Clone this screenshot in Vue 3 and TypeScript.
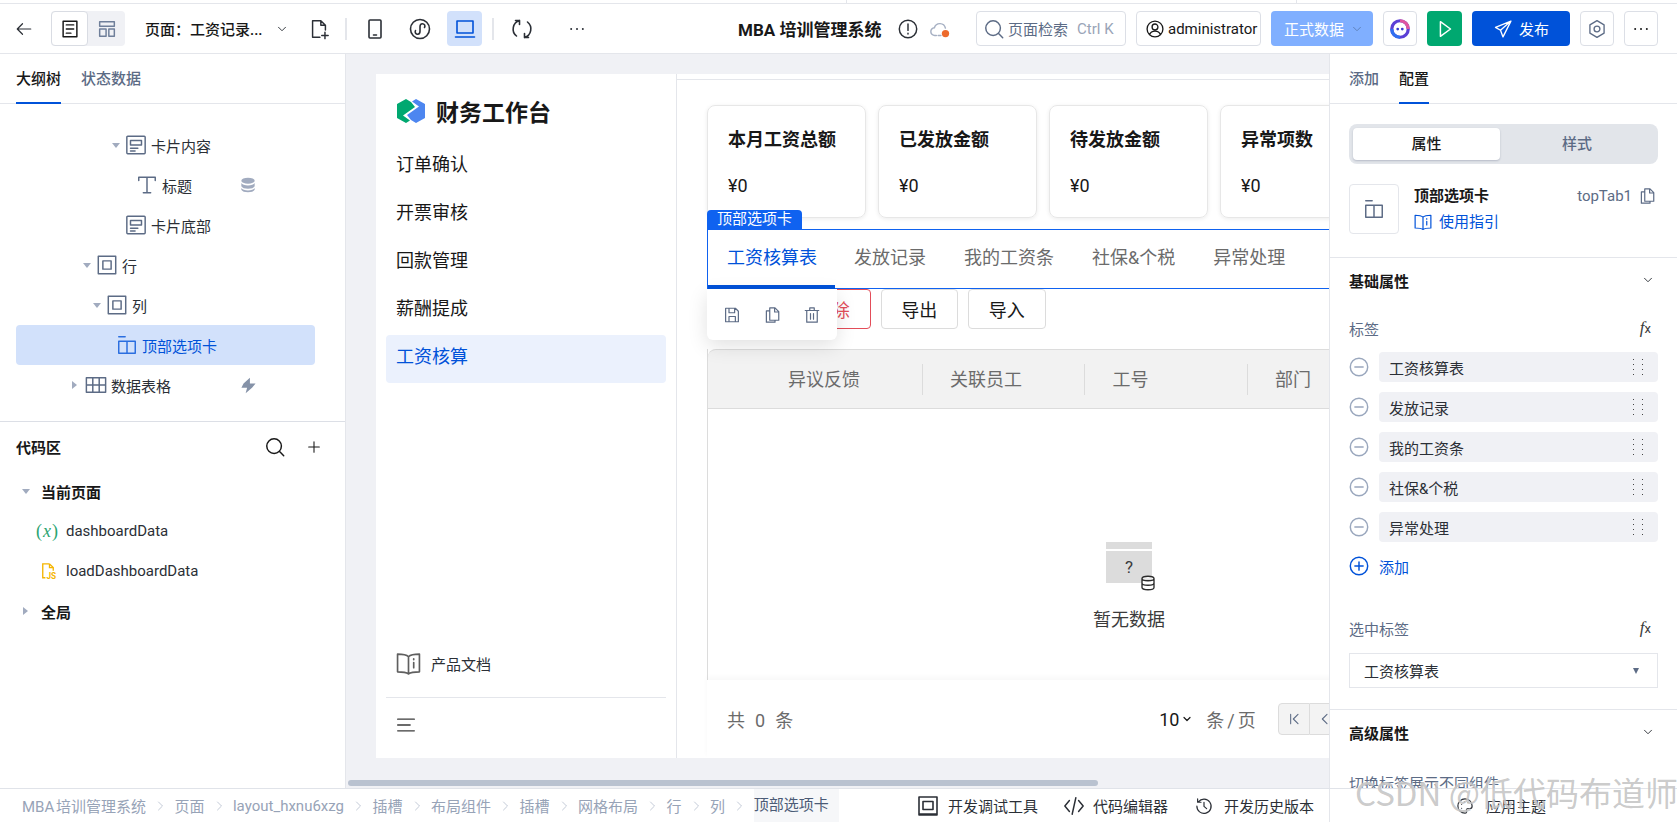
<script setup lang="ts">
interface TreeNode {
  label: string
  icon: string
  left: number
  caret?: 'down' | 'right'
  extra?: 'db' | 'bolt'
  active?: boolean
}

// stroke paths on a 24 grid
const icons: Record<string, string> = {
  back: 'M21 12H3M10 5l-7 7 7 7',
  page: 'M4.500 3.500h15v17h-15zM8 7.500h8M8 12h8M8 16.500h5',
  layout: 'M4 4h16v5H4zM4 12h7v8H4zM14 12h6v8h-6z',
  chev: 'M6 9l6 6 6-6',
  filePlus: 'M14 3H5v18h8M14 3l5 5v5M14 3v5h5M15 19h7M18.500 15.500v7',
  phone: 'M7 3h10a1 1 0 0 1 1 1v16a1 1 0 0 1-1 1H7a1 1 0 0 1-1-1V4a1 1 0 0 1 1-1zM10.500 18h3',
  mini: 'M2.500 12a9.500 9.500 0 1 0 19 0 9.500 9.500 0 1 0-19 0zM7.500 13.500c-1 2 .5 4 2.300 3.800 1.600-.2 2.200-1.400 2.200-3V9.700c0-1.600.8-3 2.400-3 2 0 3.200 2 2.100 3.800',
  laptop: 'M4 4h16v12H4zM2.500 20h19',
  refresh: 'M6.500 19A9 9 0 0 1 9.500 3.400M17.500 5a9 9 0 0 1-3 15.600M9.500 7.500v-4H5.500M14.500 16.500v4h4',
  more: 'M5 12h.01M12 12h.01M19 12h.01',
  info: 'M2.500 12a9.500 9.500 0 1 0 19 0 9.500 9.500 0 1 0-19 0zM12 6.500v7M12 16.500v1',
  cloud: 'M8 19H6.500a4.200 4.200 0 0 1-.6-8.400 6.200 6.200 0 0 1 12 .4M10 19h3',
  search: 'M3 11a8 8 0 1 0 16 0 8 8 0 1 0-16 0zM17 17l4.500 4.500',
  user: 'M2.500 12a9.500 9.500 0 1 0 19 0 9.500 9.500 0 1 0-19 0zM8.500 9.500a3.500 3.500 0 1 0 7 0 3.500 3.500 0 1 0-7 0zM5.500 19c1-3 3.500-4.500 6.500-4.500s5.500 1.500 6.500 4.500',
  send: 'M21.500 2.500L3 10l6 3.500 3 8zM21.500 2.500L9 13.500',
  hex: 'M12 2l8.500 5v10L12 22l-8.500-5V7zM12 8.500a3.500 3.500 0 1 0 0 7 3.500 3.500 0 1 0 0-7z',
  play: 'M7 4l11 8-11 8z',
  card: 'M3 2.500h18a1 1 0 0 1 1 1v17a1 1 0 0 1-1 1H3a1 1 0 0 1-1-1v-17a1 1 0 0 1 1-1zM6 7h12v5H6zM6 15.500h8M6 18.500h5',
  text: 'M3 7V3.500h18V7M12 3.500v17M8 20.500h8',
  box: 'M2.500 2.500h19v19h-19zM7.500 7.500h9v9h-9z',
  tabs: 'M3 8h18v13H3zM12 8v13M3 3h7',
  grid: 'M1.500 4h21v16h-21zM1.500 12h21M8.500 4v16M15.500 4v16',
  save: 'M3.500 3h13l4 4v14h-17zM8 3v6h7.500V3M8 21v-7h8.500v7',
  copy: 'M9 2.500h7l5 5v11.500H9zM15.500 2.500v5.500H21M9 6.500H4.500v15H16V19',
  trash: 'M3 6h18M9 6V2.500h6V6M5 6v15.500h14V6M10 10v7.500M14 10v7.500',
  book: 'M12 5.500C10 3.500 6 3 1.500 3v17c4.500 0 8.500.500 10.500 2 2-1.500 6-2 10.500-2V3c-4.500 0-8.500.500-10.500 2.500zM12 5.500V22M17 7.500v.800M17 11v5',
  menu: 'M2 5h20M2 12h15M2 19h20',
  minus: 'M2.500 12a9.500 9.500 0 1 0 19 0 9.500 9.500 0 1 0-19 0zM7.500 12h9',
  plus: 'M2.500 12a9.500 9.500 0 1 0 19 0 9.500 9.500 0 1 0-19 0zM12 7.500v9M7.500 12h9',
  add: 'M12 4v16M4 12h16',
  monitor: 'M3 3h18v18H3zM7 7.500h10v8H7zM3 20h18',
  code: 'M7 6l-5 6 5 6M17 6l5 6-5 6M14 3l-4 18',
  history: 'M4.500 6.500A9.500 9.500 0 1 1 2.500 12M3.500 2.500v4.500H8M12 7v5.500l3.500 3',
  palette: 'M12 2.500a9.500 9.500 0 0 0 0 19c2 0 2.500-1.500 2-3-.600-1.800.400-3 2-3h2.500c2 0 3-1.500 3-3.500 0-5.500-4.500-9.500-9.500-9.500zM7.500 10h.01M11 6.500h.01M16 7.500h.01M7.500 15h.01',
  file: 'M14 2.500H5V21h3.500M14 2.500l5 5v4M14 2.500v5h5',
  pgFirst: 'M7 5v14M18 5l-7 7 7 7',
  pgPrev: 'M15 5l-7 7 7 7',
  crumb: 'M9 4l8 8-8 8',
  dbLine: 'M4 6c0-4 16-4 16 0v12c0 4-16 4-16 0zM4 6c0 4 16 4 16 0M4 12c0 4 16 4 16 0',
}

const tree: TreeNode[] = [
  { label: '卡片内容', icon: 'card', left: 127, caret: 'down' },
  { label: '标题', icon: 'text', left: 138, extra: 'db' },
  { label: '卡片底部', icon: 'card', left: 127 },
  { label: '行', icon: 'box', left: 98, caret: 'down' },
  { label: '列', icon: 'box', left: 108, caret: 'down' },
  { label: '顶部选项卡', icon: 'tabs', left: 118, active: true },
  { label: '数据表格', icon: 'grid', left: 87, caret: 'right', extra: 'bolt' },
]

const menus = ['订单确认', '开票审核', '回款管理', '薪酬提成', '工资核算']
const stats = ['本月工资总额', '已发放金额', '待发放金额', '异常项数']
const tabs = ['工资核算表', '发放记录', '我的工资条', '社保&个税', '异常处理']
const columns = ['异议反馈', '关联员工', '工号', '部门']
const crumbs = ['MBA 培训管理系统', '页面', 'layout_hxnu6xzg', '插槽', '布局组件', '插槽', '网格布局', '行', '列', '顶部选项卡']
</script>

<template>
  <div class="root">
    <div class="strip"><i></i><i></i></div>

    <header class="header">
      <button class="tool back"><svg class="ico i18" viewBox="0 0 24 24"><path :d="icons.back" /></svg></button>
      <div class="view-seg">
        <span class="view-on"><svg class="ico i22" viewBox="0 0 24 24"><path :d="icons.page" /></svg></span>
        <span class="view-off"><svg class="ico i22 muted" viewBox="0 0 24 24"><path :d="icons.layout" /></svg></span>
      </div>
      <span class="page-name">页面：工资记录...</span>
      <button class="tool name-chev"><svg class="ico i14" viewBox="0 0 24 24"><path :d="icons.chev" /></svg></button>
      <button class="tool new-page"><svg class="ico i22" viewBox="0 0 24 24"><path :d="icons.filePlus" /></svg></button>
      <i class="divider first"></i>
      <button class="tool"><svg class="ico i24" viewBox="0 0 24 24"><path :d="icons.phone" /></svg></button>
      <button class="tool"><svg class="ico i24" viewBox="0 0 24 24"><path :d="icons.mini" /></svg></button>
      <button class="tool on"><svg class="ico i24" viewBox="0 0 24 24"><path :d="icons.laptop" /></svg></button>
      <i class="divider"></i>
      <button class="tool"><svg class="ico i24" viewBox="0 0 24 24"><path :d="icons.refresh" /></svg></button>
      <button class="tool dots"><svg class="ico i20 thick" viewBox="0 0 24 24"><path :d="icons.more" /></svg></button>

      <strong class="app-title">MBA 培训管理系统</strong>
      <svg class="ico i22 app-info" viewBox="0 0 24 24"><path :d="icons.info" /></svg>
      <svg class="ico i22 app-cloud" viewBox="0 0 24 24">
        <path :d="icons.cloud" />
        <circle class="dot-orange" cx="18" cy="17" r="4" />
      </svg>

      <div class="actions">
        <div class="search">
          <svg class="ico i22 slate" viewBox="0 0 24 24"><path :d="icons.search" /></svg>
          <span>页面检索</span>
          <em>Ctrl K</em>
        </div>
        <div class="user">
          <svg class="ico i20" viewBox="0 0 24 24"><path :d="icons.user" /></svg>
          <span>administrator</span>
        </div>
        <div class="data-btn">
          <span>正式数据</span>
          <svg class="ico i14" viewBox="0 0 24 24"><path :d="icons.chev" /></svg>
        </div>
        <div class="square robot">
          <svg width="22" height="22" viewBox="0 0 24 24">
            <circle cx="12" cy="12" r="9" fill="none" stroke="#5b3fd6" stroke-width="3.500" />
            <path d="M12 3a9 9 0 0 1 9 9" fill="none" stroke="#e0559f" stroke-width="3.500" />
            <path d="M3 12a9 9 0 0 0 9 9" fill="none" stroke="#2f6ff0" stroke-width="3.500" />
            <circle cx="9.500" cy="12" r="1.500" fill="#3b3bd0" />
            <circle cx="14.500" cy="12" r="1.500" fill="#3b3bd0" />
          </svg>
        </div>
        <div class="play"><svg class="ico i22" viewBox="0 0 24 24"><path :d="icons.play" /></svg></div>
        <div class="publish">
          <svg class="ico i20" viewBox="0 0 24 24"><path :d="icons.send" /></svg>
          <span>发布</span>
        </div>
        <div class="square"><svg class="ico i20 slate" viewBox="0 0 24 24"><path :d="icons.hex" /></svg></div>
        <div class="square"><svg class="ico i20 thick" viewBox="0 0 24 24"><path :d="icons.more" /></svg></div>
      </div>
    </header>

    <main class="main">
      <aside class="left-panel">
        <div class="panel-tabs">
          <span class="on">大纲树</span>
          <span>状态数据</span>
        </div>

        <div class="tree">
          <div
            v-for="node in tree"
            :key="node.label"
            class="tree-row"
            :class="{ active: node.active }"
            :style="{ paddingLeft: node.left - 18 + 'px' }"
          >
            <i v-if="node.caret" class="caret" :class="node.caret"></i>
            <svg class="ico i22 slate" viewBox="0 0 24 24"><path :d="icons[node.icon]" /></svg>
            <span>{{ node.label }}</span>
            <svg v-if="node.extra === 'db'" class="extra" width="16" height="16" viewBox="0 0 24 24">
              <ellipse cx="12" cy="5.500" rx="10" ry="4.500" />
              <path d="M2 9c2 5 18 5 20 0v5c-2 5-18 5-20 0z" />
              <path d="M2 16.500c2 5 18 5 20 0V19c-2 5-18 5-20 0z" />
            </svg>
            <svg v-if="node.extra === 'bolt'" class="extra bolt" width="17" height="17" viewBox="0 0 24 24">
              <path d="M14 1L5 9 2 15h8l-2 8 9-8 5-6h-8z" />
            </svg>
          </div>
        </div>

        <section class="code">
          <div class="code-head">
            <strong>代码区</strong>
            <svg class="ico i22" viewBox="0 0 24 24"><path :d="icons.search" /></svg>
            <svg class="ico i16" viewBox="0 0 24 24"><path :d="icons.add" /></svg>
          </div>
          <div class="code-group"><i class="caret down"></i><strong>当前页面</strong></div>
          <div class="code-item">
            <span class="var-icon">(<i>x</i>)</span>
            <span>dashboardData</span>
          </div>
          <div class="code-item">
            <svg class="js-icon" width="18" height="20" viewBox="0 0 24 24">
              <path class="js-line" :d="icons.file" />
              <text x="10" y="22" class="js-text">JS</text>
            </svg>
            <span>loadDashboardData</span>
          </div>
          <div class="code-group"><i class="caret right"></i><strong>全局</strong></div>
        </section>
      </aside>

      <section class="canvas">
        <div class="app">
          <nav class="side">
            <div class="brand">
              <svg width="28" height="24" viewBox="0 0 28 24">
                <path fill="#00a870" d="M9 0L0 5v14l9 5 4-2.500-7-5L18 8l-4-5z" />
                <path fill="#4d86f0" d="M19 24l9-5V5l-9-5-4 2.500 7 5L10 16l4 5z" />
              </svg>
              <strong>财务工作台</strong>
            </div>
            <ul class="menu">
              <li v-for="(m, i) in menus" :key="m" :class="{ on: i === 4 }">{{ m }}</li>
            </ul>
            <div class="docs">
              <svg class="ico i25" viewBox="0 0 24 24"><path :d="icons.book" /></svg>
              <span>产品文档</span>
            </div>
            <div class="collapse"><svg class="ico i20" viewBox="0 0 24 24"><path :d="icons.menu" /></svg></div>
          </nav>

          <div class="content">
            <div class="cards">
              <div v-for="s in stats" :key="s" class="card">
                <strong>{{ s }}</strong>
                <span>¥0</span>
              </div>
            </div>

            <div class="top-tabs">
              <span class="sel-tag">顶部选项卡</span>
              <span v-for="(t, i) in tabs" :key="t" class="top-tab" :class="{ on: i === 0 }">{{ t }}</span>
              <div class="sel-tools">
                <svg class="ico i18 slate" viewBox="0 0 24 24"><path :d="icons.save" /></svg>
                <svg class="ico i18 slate" viewBox="0 0 24 24"><path :d="icons.copy" /></svg>
                <svg class="ico i18 slate" viewBox="0 0 24 24"><path :d="icons.trash" /></svg>
              </div>
            </div>

            <div class="btns">
              <button class="danger">删除</button>
              <button>导出</button>
              <button>导入</button>
            </div>

            <div class="table">
              <div class="thead">
                <span v-for="c in columns" :key="c" class="th">{{ c }}</span>
              </div>
              <div class="empty">
                <div class="empty-pic">
                  <i class="empty-top"></i>
                  <b class="empty-box">?</b>
                  <svg class="empty-db" width="18" height="18" viewBox="0 0 24 24"><path :d="icons.dbLine" /></svg>
                </div>
                <span>暂无数据</span>
              </div>
            </div>

            <div class="pagination">
              <span class="total">共<b>0</b>条</span>
              <div class="pager">
                <span class="size">10<svg class="ico i12 thick" viewBox="0 0 24 24"><path :d="icons.chev" /></svg></span>
                <span class="per">条 / 页</span>
                <span class="pg"><svg class="ico i16 slate" viewBox="0 0 24 24"><path :d="icons.pgFirst" /></svg></span>
                <span class="pg"><svg class="ico i16 slate" viewBox="0 0 24 24"><path :d="icons.pgPrev" /></svg></span>
              </div>
            </div>
          </div>
        </div>
        <i class="hscroll"></i>
      </section>

      <aside class="right-panel">
        <div class="panel-tabs">
          <span>添加</span>
          <span class="on">配置</span>
        </div>

        <div class="seg">
          <span class="seg-on">属性</span>
          <span>样式</span>
        </div>

        <div class="comp">
          <div class="comp-ico"><svg class="ico i22 slate" viewBox="0 0 24 24"><path :d="icons.tabs" /></svg></div>
          <div class="comp-text">
            <strong>顶部选项卡</strong>
            <a><svg class="ico i18" viewBox="0 0 24 24"><path :d="icons.book" /></svg>使用指引</a>
          </div>
          <span class="comp-id">topTab1</span>
          <svg class="ico i18 slate" viewBox="0 0 24 24"><path :d="icons.copy" /></svg>
        </div>

        <div class="block">
          <div class="block-head">
            <strong>基础属性</strong>
            <svg class="ico i14" viewBox="0 0 24 24"><path :d="icons.chev" /></svg>
          </div>
          <div class="field"><span>标签</span><span class="fx"><i>f</i><small>x</small></span></div>
          <div v-for="t in tabs" :key="t" class="opt">
            <svg class="ico i22 minus" viewBox="0 0 24 24"><path :d="icons.minus" /></svg>
            <div class="opt-box">
              <span>{{ t }}</span>
              <i class="grip"></i>
            </div>
          </div>
          <div class="add">
            <svg class="ico i22" viewBox="0 0 24 24"><path :d="icons.plus" /></svg>
            <span>添加</span>
          </div>
          <div class="field picked"><span>选中标签</span><span class="fx"><i>f</i><small>x</small></span></div>
          <div class="select">
            <span>工资核算表</span>
            <i class="select-caret"></i>
          </div>
        </div>

        <div class="block second">
          <div class="block-head">
            <strong>高级属性</strong>
            <svg class="ico i14" viewBox="0 0 24 24"><path :d="icons.chev" /></svg>
          </div>
          <div class="field switch"><span>切换标签展示不同组件</span></div>
        </div>
      </aside>
    </main>

    <footer class="footer">
      <div class="crumbs">
        <template v-for="(c, i) in crumbs" :key="i">
          <svg v-if="i > 0" class="ico i12 crumb-sep" viewBox="0 0 24 24"><path :d="icons.crumb" /></svg>
          <span :class="{ last: i === crumbs.length - 1 }">{{ c }}</span>
        </template>
      </div>
      <div class="dev">
        <span><svg class="ico i24" viewBox="0 0 24 24"><path :d="icons.monitor" /></svg>开发调试工具</span>
        <span class="dev-code"><svg class="ico i22" viewBox="0 0 24 24"><path :d="icons.code" /></svg>代码编辑器</span>
        <span class="dev-his"><svg class="ico i18" viewBox="0 0 24 24"><path :d="icons.history" /></svg>开发历史版本</span>
      </div>
      <div class="theme">
        <svg class="ico i18" viewBox="0 0 24 24"><path :d="icons.palette" /></svg>
        <span>应用主题</span>
      </div>
    </footer>

    <div class="watermark">CSDN @低代码布道师</div>
  </div>
</template>

<style scoped>
.root {
  position: relative;
  width: 1677px;
  height: 822px;
  overflow: hidden;
  display: flex;
  flex-direction: column;
  background: #fff;
  color: #181818;
  font-family: Roboto, "Noto Sans CJK SC", sans-serif;
  font-size: 15px;
}

button {
  font-family: inherit;
  padding: 0;
  background: none;
  border: 0;
}

strong {
  font-weight: 500;
}

/* icons */
.ico {
  flex: none;
  fill: none;
  stroke: currentColor;
  stroke-width: 1.6;
  stroke-linejoin: round;
  stroke-linecap: round;
}
.i12 { width: 12px; height: 12px; }
.i14 { width: 14px; height: 14px; }
.i16 { width: 16px; height: 16px; }
.i18 { width: 18px; height: 18px; }
.i20 { width: 20px; height: 20px; }
.i22 { width: 22px; height: 22px; }
.i24 { width: 24px; height: 24px; }
.i25 { width: 25px; height: 25px; }
.slate { color: #5c6b85; }
.muted { color: #6f7f9a; }
.thick { stroke-width: 2.4; }

.strip {
  height: 3px;
  border-bottom: 1px solid #e4e6eb;
  display: flex;
}
.strip i {
  width: 1px;
  background: #e4e6eb;
  margin-left: 846px;
}
.strip i + i {
  margin-left: 449px;
}

/* header */
.header {
  height: 50px;
  flex: none;
  box-sizing: border-box;
  border-bottom: 1px solid #e4e6eb;
  display: flex;
  align-items: center;
  gap: 10px;
}
.tool {
  width: 35px;
  height: 35px;
  flex: none;
  display: flex;
  align-items: center;
  justify-content: center;
  border-radius: 4px;
  color: #2b2f36;
}
.tool.on {
  background: #d2e1fb;
  color: #0052d9;
}
.back { margin-left: 6px; }
.view-seg {
  display: flex;
  width: 74px;
  height: 35px;
  background: #f0f1f5;
  border-radius: 4px;
}
.view-on {
  width: 37px;
  box-sizing: border-box;
  background: #fff;
  border: 1px solid #d9dce3;
  border-radius: 4px;
  display: flex;
  align-items: center;
  justify-content: center;
}
.view-off {
  width: 37px;
  display: flex;
  align-items: center;
  justify-content: center;
}
.page-name {
  width: 116px;
  margin-left: 10px;
  font-weight: 500;
  white-space: nowrap;
}
.name-chev { margin-left: -7px; }
.new-page { margin-left: -8px; }
.divider {
  width: 2px;
  height: 22px;
  background: #e4e6eb;
  flex: none;
}
.divider.first { margin-left: -1px; }
.dots { margin-left: 10px; }
.app-title {
  margin-left: 134px;
  font-size: 17px;
  font-weight: 700;
  white-space: nowrap;
}
.app-info {
  margin-left: 6px;
  color: #2b2f36;
}
.app-cloud {
  margin-left: 0;
  color: #a6b0c3;
}
.dot-orange {
  fill: #ed6a2c;
  stroke: none;
}
.actions {
  margin-left: auto;
  margin-right: 19px;
  display: flex;
  gap: 10px;
  align-items: center;
}
.search,
.user,
.square {
  box-sizing: border-box;
  height: 35px;
  border: 1px solid #dcdfe6;
  border-radius: 4px;
  display: flex;
  align-items: center;
}
.search {
  width: 150px;
  padding-left: 6px;
  gap: 3px;
  color: #5c6b85;
}
.search em {
  font-style: normal;
  color: #9aa5b8;
  margin-left: 6px;
  white-space: nowrap;
}
.user {
  width: 125px;
  padding-left: 8px;
  gap: 3px;
}
.data-btn {
  width: 102px;
  height: 35px;
  box-sizing: border-box;
  padding-left: 13px;
  background: #80afff;
  border-radius: 4px;
  color: #fff;
  display: flex;
  align-items: center;
  gap: 6px;
}
.data-btn .ico { color: #5c7fb8; }
.square {
  width: 34px;
  justify-content: center;
}
.play {
  width: 35px;
  height: 35px;
  background: #00a870;
  border-radius: 4px;
  color: #fff;
  display: flex;
  align-items: center;
  justify-content: center;
}
.publish {
  width: 98px;
  height: 35px;
  background: #0052d9;
  border-radius: 4px;
  color: #fff;
  display: flex;
  align-items: center;
  justify-content: center;
  gap: 6px;
}

/* main */
.main {
  flex: 1;
  display: flex;
  min-height: 0;
}
.left-panel {
  width: 346px;
  flex: none;
  box-sizing: border-box;
  border-right: 1px solid #e4e6eb;
  display: flex;
  flex-direction: column;
}
.panel-tabs {
  height: 50px;
  flex: none;
  box-sizing: border-box;
  border-bottom: 1px solid #e4e6eb;
  display: flex;
  gap: 20px;
  padding-left: 16px;
  color: #5c6b85;
  font-weight: 500;
}
.right-panel .panel-tabs {
  padding-left: 19px;
}
.panel-tabs span {
  line-height: 50px;
  height: 50px;
  box-sizing: border-box;
}
.panel-tabs .on {
  color: #181818;
  border-bottom: 2px solid #0052d9;
}

.tree {
  height: 318px;
  flex: none;
  box-sizing: border-box;
  padding-top: 21px;
  border-bottom: 1px solid #dcdfe6;
}
.tree-row {
  position: relative;
  height: 40px;
  margin-left: 16px;
  width: 299px;
  box-sizing: border-box;
  display: flex;
  align-items: center;
  gap: 4px;
  border-radius: 4px;
  color: #2b2f36;
}
.tree-row.active {
  background: #d2e1fb;
  color: #0052d9;
}
.tree-row.active .ico { color: #2a6ee0; }
.caret {
  position: absolute;
  width: 0;
  height: 0;
}
.caret.down {
  margin-left: -13px;
  border-left: 4px solid transparent;
  border-right: 4px solid transparent;
  border-top: 5px solid #a1abbf;
}
.caret.right {
  margin-left: -13px;
  border-top: 4px solid transparent;
  border-bottom: 4px solid transparent;
  border-left: 5px solid #a1abbf;
}
.extra {
  position: absolute;
  left: 224px;
  fill: #a1abbf;
}
.extra.bolt {
  fill: #8592a8;
}

.code {
  padding: 0 16px;
}
.code-head {
  height: 49px;
  display: flex;
  align-items: center;
}
.code-head strong {
  font-weight: 700;
  margin-right: auto;
}
.code-head .ico + .ico {
  margin: 0 7px 0 20px;
}
.code-group {
  position: relative;
  height: 40px;
  padding-left: 25px;
  display: flex;
  align-items: center;
}
.code-group strong { font-weight: 700; }
.code-group .caret.down { margin-left: -19px; }
.code-group .caret.right { margin-left: -18px; }
.code-item {
  height: 40px;
  display: flex;
  align-items: center;
  font-size: 15px;
  color: #2b2f36;
}
.var-icon {
  width: 28px;
  margin: 0 2px 0 20px;
  color: #2ba471;
  font-family: "Liberation Serif", serif;
  font-size: 18px;
  white-space: nowrap;
  letter-spacing: 1px;
}
.js-icon {
  flex: none;
  margin: 0 9px 0 23px;
}
.js-line {
  fill: none;
  stroke: #f5b500;
  stroke-width: 1.8;
}
.js-text {
  fill: #f5b500;
  font-size: 11px;
  font-weight: 700;
}

/* canvas */
.canvas {
  position: relative;
  flex: 1;
  min-width: 0;
  background: #f0f1f5;
  padding: 20px 0 0 30px;
  overflow: hidden;
}
.app {
  width: 1300px;
  height: 684px;
  background: #fff;
  display: flex;
}
.side {
  width: 301px;
  flex: none;
  box-sizing: border-box;
  border-right: 1px solid #e4e6eb;
  padding: 0 10px;
  display: flex;
  flex-direction: column;
}
.brand {
  height: 74px;
  padding-left: 11px;
  display: flex;
  align-items: center;
  gap: 11px;
}
.brand strong {
  font-size: 23px;
  font-weight: 700;
}
.menu {
  list-style: none;
  margin: -5px 0 0;
  padding: 0;
  flex: 1;
  font-size: 18px;
}
.menu li {
  height: 48px;
  line-height: 44px;
  padding-left: 10px;
  border-radius: 4px;
}
.menu li.on {
  background: #ebf1fd;
  color: #0052d9;
}
.docs {
  height: 67px;
  padding-left: 10px;
  box-sizing: border-box;
  display: flex;
  align-items: center;
  gap: 10px;
  color: #2b2f36;
}
.docs .ico { color: #5f5f5f; }
.collapse {
  height: 61px;
  border-top: 1px solid #e4e6eb;
  padding: 0 0 7px 10px;
  display: flex;
  align-items: center;
  color: #3b3b3b;
  box-sizing: border-box;
}

.content {
  flex: 1;
  min-width: 0;
  position: relative;
  display: flex;
  flex-direction: column;
  padding-left: 30px;
  background: linear-gradient(#e4e6eb, #e4e6eb) 0 5px / 100% 1px no-repeat;
}
.cards {
  margin-top: 31px;
  display: flex;
  gap: 12px;
}
.card {
  width: 159px;
  height: 113px;
  flex: none;
  box-sizing: border-box;
  border: 1px solid #e7e7e7;
  border-radius: 8px;
  box-shadow: 0 1px 4px rgba(0, 0, 0, 0.08);
  padding: 21px 0 0 20px;
  display: flex;
  flex-direction: column;
  gap: 20px;
  font-size: 18px;
}
.card strong {
  font-weight: 700;
  line-height: 26px;
}
.card span {
  line-height: 26px;
}

.top-tabs {
  position: relative;
  margin-top: 11px;
  height: 60px;
  box-sizing: border-box;
  border: 1px solid #0f62f0;
  border-right: 0;
  display: flex;
  font-size: 18px;
  color: #6b6b6b;
}
.top-tab {
  padding: 0 19px;
  line-height: 56px;
  white-space: nowrap;
}
.top-tab.on {
  color: #0052d9;
  padding-right: 18px;
  box-shadow: inset 0 -4px 0 #0052d9;
  height: 59px;
}
.sel-tag {
  position: absolute;
  left: -1px;
  top: -20px;
  width: 95px;
  height: 20px;
  background: #0f62f0;
  border-radius: 4px 4px 0 0;
  color: #fff;
  font-size: 15px;
  line-height: 19px;
  text-align: center;
}
.sel-tools {
  position: absolute;
  z-index: 3;
  left: -1px;
  top: 59px;
  width: 130px;
  height: 51px;
  background: #fff;
  border-radius: 0 0 6px 6px;
  box-shadow: 0 6px 20px rgba(0, 0, 0, 0.12);
  display: flex;
  align-items: center;
  justify-content: center;
  gap: 22px;
}

.btns {
  height: 40px;
  padding-left: 86px;
  display: flex;
  gap: 10px;
  flex: none;
}
.btns button {
  width: 77.500px;
  box-sizing: border-box;
  border: 1px solid #dcdcdc;
  border-radius: 4px;
  font-size: 18px;
  color: #181818;
}
.btns .danger {
  border-color: #e34d59;
  color: #e34d59;
}

.table {
  margin-top: 20px;
  flex: 1;
  min-height: 0;
  border-left: 1px solid #dcdcdc;
  display: flex;
  flex-direction: column;
}
.thead {
  height: 60px;
  flex: none;
  box-sizing: border-box;
  background: #f2f2f2;
  border-top: 1px solid #dcdcdc;
  border-bottom: 1px solid #dcdcdc;
  border-top-left-radius: 8px;
  padding-left: 52px;
  display: flex;
  align-items: center;
  font-size: 18px;
  color: #6b6b6b;
}
.th {
  width: 162.500px;
  box-sizing: border-box;
  padding-left: 27.500px;
  height: 31px;
  line-height: 31px;
  border-left: 1px solid #dcdcdc;
}
.th:first-child {
  width: 161.500px;
  padding-left: 28px;
  border-left: 0;
}
.empty {
  flex: 1;
  width: 842px;
  display: flex;
  flex-direction: column;
  align-items: center;
  padding-top: 133px;
  font-size: 18px;
  color: #3b3b3b;
  box-sizing: border-box;
}
.empty-pic {
  position: relative;
  width: 46px;
  height: 41px;
  margin-bottom: 22px;
}
.empty-top {
  display: block;
  height: 7px;
  background: #dcdcdc;
}
.empty-box {
  display: block;
  margin-top: 2px;
  height: 32px;
  background: #dcdcdc;
  font-weight: 400;
  font-size: 17px;
  line-height: 32px;
  text-align: center;
  color: #3b3b3b;
}
.empty-db {
  position: absolute;
  right: -5px;
  bottom: -9px;
  fill: #fff;
  stroke: #2b2b2b;
  stroke-width: 1.8;
}
.pagination {
  height: 78px;
  flex: none;
  padding-left: 20px;
  display: flex;
  align-items: center;
  background: #fff;
  font-size: 18px;
  color: #6b6b6b;
  box-shadow: 0 -3px 5px rgba(0, 0, 0, 0.03);
  position: relative;
}
.total b {
  font-weight: 400;
  margin: 0 10px;
}
.pager {
  margin-left: 366px;
  display: flex;
  align-items: center;
}
.size {
  display: flex;
  align-items: center;
  gap: 2px;
  color: #181818;
}
.per {
  margin-left: 13px;
  word-spacing: -1.500px;
  white-space: nowrap;
}
.pg {
  width: 32px;
  height: 32px;
  box-sizing: border-box;
  background: #f3f3f3;
  border: 1px solid #dcdcdc;
  display: flex;
  align-items: center;
  justify-content: center;
  flex: none;
}
.per + .pg {
  margin-left: 22px;
  border-radius: 4px 0 0 4px;
}
.pg + .pg {
  border-left: 0;
}
.hscroll {
  position: absolute;
  left: 2px;
  bottom: 2px;
  width: 750px;
  height: 6px;
  border-radius: 3px;
  background: #b9c2d0;
}

/* right panel */
.right-panel {
  width: 348px;
  flex: none;
  box-sizing: border-box;
  border-left: 1px solid #e4e6eb;
  background: #fff;
  overflow: hidden;
}
.seg {
  margin: 20px 19px 0;
  height: 40px;
  box-sizing: border-box;
  padding: 4px;
  background: #e2e5ea;
  border-radius: 8px;
  display: flex;
  color: #5c6b85;
  font-weight: 500;
}
.seg span {
  flex: 1;
  line-height: 32px;
  text-align: center;
}
.seg .seg-on {
  flex: none;
  width: 147px;
  background: #fff;
  border-radius: 4px;
  color: #181818;
  box-shadow: 0 1px 2px rgba(80, 90, 120, 0.3);
}
.comp {
  margin: 20px 21px 0 19px;
  height: 50px;
  display: flex;
  align-items: flex-start;
}
.comp-ico {
  width: 50px;
  height: 50px;
  box-sizing: border-box;
  border: 1px solid #e4e6eb;
  border-radius: 4px;
  display: flex;
  align-items: center;
  justify-content: center;
}
.comp-text {
  margin-left: 15px;
  display: flex;
  flex-direction: column;
  gap: 2px;
  flex: 1;
}
.comp-text strong {
  font-weight: 700;
  line-height: 24px;
}
.comp-text a {
  display: flex;
  align-items: center;
  gap: 7px;
  color: #0052d9;
  line-height: 24px;
}
.comp-id {
  color: #5c6b85;
  line-height: 24px;
  margin-right: 6px;
}
.comp > .ico {
  margin-top: 3px;
}
.block {
  margin-top: 23px;
  border-top: 1px solid #e4e6eb;
  padding: 0 19px;
}
.block-head {
  height: 44px;
  display: flex;
  align-items: center;
  justify-content: space-between;
}
.block-head strong {
  font-weight: 700;
}
.block-head .ico {
  margin-right: 3px;
  color: #2b2f36;
}
.field {
  display: flex;
  justify-content: space-between;
  align-items: center;
  height: 24px;
  margin-top: 14px;
  color: #5c6b85;
}
.fx {
  font-family: "Liberation Serif", serif;
  font-size: 17px;
  color: #3b3b3b;
  margin-right: 7px;
}
.fx small {
  font-family: Roboto, sans-serif;
  font-size: 13px;
}
.opt {
  display: flex;
  align-items: center;
  height: 30px;
  margin-top: 10px;
}
.field + .opt {
  margin-top: 12px;
}
.minus {
  color: #9aa7bd;
  margin: 0 9px 0 -1px;
}
.opt-box {
  flex: 1;
  height: 30px;
  padding: 0 11px 0 10px;
  background: #f0f1f5;
  border-radius: 4px;
  display: flex;
  align-items: center;
  justify-content: space-between;
  color: #2b2f36;
}
.grip {
  width: 18px;
  height: 20px;
  background-image: radial-gradient(circle, #444 0.8px, transparent 1px);
  background-size: 9px 5px;
}
.add {
  height: 24px;
  margin-top: 12px;
  display: flex;
  align-items: center;
  gap: 9px;
  color: #0052d9;
  margin-left: -1px;
}
.field.picked {
  margin-top: 38px;
}
.select {
  height: 35px;
  margin-top: 13px;
  box-sizing: border-box;
  border: 1px solid #e4e6eb;
  padding: 0 18px 0 14px;
  display: flex;
  align-items: center;
  justify-content: space-between;
  color: #2b2f36;
}
.select-caret {
  border-left: 3.500px solid transparent;
  border-right: 3.500px solid transparent;
  border-top: 6px solid #5c6b85;
}
.block.second {
  margin-top: 21px;
}
.field.switch {
  margin-top: 16px;
}

/* footer */
.footer {
  height: 34px;
  flex: none;
  box-sizing: border-box;
  border-top: 1px solid #e0e3e9;
  display: flex;
  align-items: center;
  position: relative;
  background: #fff;
  z-index: 2;
}
.crumbs {
  padding-left: 22px;
  display: flex;
  align-items: center;
  height: 100%;
  color: #97a3b7;
  white-space: nowrap;
  word-spacing: -2px;
}
.crumb-sep {
  margin: 0 8.250px;
  color: #b4bdcb;
}
.crumbs .last {
  color: #4b5b76;
  background: #f6f7f9;
  padding-right: 10px;
  height: 100%;
  line-height: 33px;
}
.dev {
  margin-left: auto;
  padding-right: 15px;
  height: 100%;
  display: flex;
  align-items: center;
  color: #2b2f36;
}
.dev span {
  display: flex;
  align-items: center;
  gap: 8px;
  white-space: nowrap;
}
.dev .dev-code {
  margin-left: 25px;
}
.dev .dev-his {
  gap: 11px;
  margin-left: 27px;
}
.theme {
  width: 348px;
  height: 100%;
  box-sizing: border-box;
  border-left: 1px solid #e4e6eb;
  padding-left: 126px;
  display: flex;
  align-items: center;
  gap: 12px;
  color: #2b2f36;
}

.watermark {
  position: absolute;
  z-index: 5;
  left: 1355px;
  top: 772px;
  font-size: 33px;
  line-height: 40px;
  white-space: nowrap;
  color: rgba(120, 120, 120, 0.4);
  text-shadow: 0 0 1px rgba(255, 255, 255, 0.9);
  font-family: "Noto Sans CJK SC", sans-serif;
}
</style>

<style>
html,
body {
  background: #fff;
}
</style>
